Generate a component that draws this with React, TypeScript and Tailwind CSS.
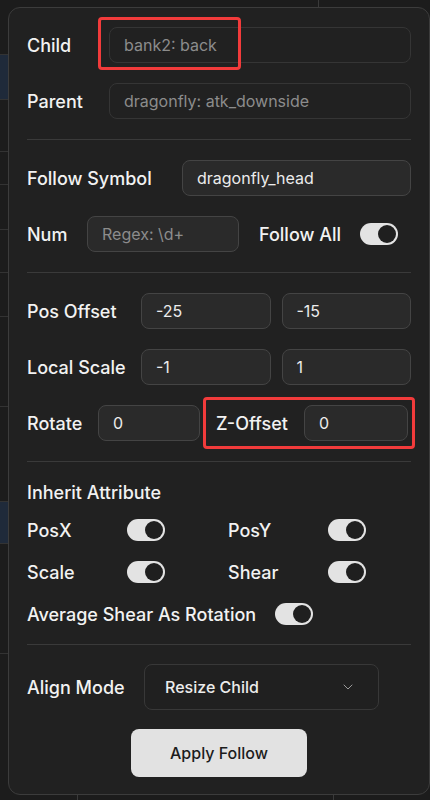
import { ChevronDown } from "lucide-react";

const font = { fontFamily: "Inter, 'Noto Sans', sans-serif" };

function Toggle() {
  return (
    <div className="relative h-[22px] w-[38px] flex-shrink-0 rounded-full bg-[#e3e3e3]">
      <div className="absolute right-[2px] top-[2px] h-[18px] w-[18px] rounded-full bg-[#1f1f1f]" />
    </div>
  );
}

function Field({
  value,
  muted,
  plain,
  className = "",
}: {
  value: string;
  muted?: boolean;
  plain?: boolean;
  className?: string;
}) {
  return (
    <div
      className={`flex h-9 items-center rounded-lg border px-[14px] text-[16px] ${
        plain
          ? "border-[#353535] bg-[#212121] text-[#8c8c8c]"
          : muted
            ? "border-[#444] bg-[#2a2a2a] text-[#8c8c8c]"
            : "border-[#444] bg-[#2a2a2a] text-[#ececec]"
      } ${className}`}
    >
      {value}
    </div>
  );
}

function Label({ children, className = "" }: { children: React.ReactNode; className?: string }) {
  return <span className={`flex-shrink-0 text-[18px] font-medium text-[#f2f2f2] ${className}`}>{children}</span>;
}

function Sep() {
  return <div className="h-px bg-[#3a3a3a]" />;
}

export default function App() {
  return (
    <div className="relative h-[800px] w-[430px] overflow-hidden bg-[#1c1c1c]" style={font}>
      {/* background app peeking around the popover */}
      <div className="absolute left-0 top-0 flex h-full w-[8px] flex-col">
        <div className="h-[55px] border-b border-[#333]" />
        <div className="h-[45px] bg-[#1f2a3a] border-b border-[#333]" />
        <div className="h-[52px] border-b border-[#333]" />
        <div className="h-[33px] border-b border-[#333]" />
        <div className="h-[45px] border-b border-[#333]" />
        <div className="h-[43px] border-b border-[#333]" />
        <div className="h-[44px] border-b border-[#333]" />
        <div className="h-[90px] border-b border-[#333]" />
        <div className="h-[95px] border-b border-[#333]" />
        <div className="h-[42px] bg-[#1f2a3a] border-b border-[#333]" />
        <div className="h-[110px] border-b border-[#333]" />
      </div>
      <div className="absolute left-[318px] top-0 h-[8px] w-px bg-[#3a3a3a]" />
      <div className="absolute bottom-0 left-[77px] h-[5px] w-px bg-[#3a3a3a]" />
      <div className="absolute bottom-0 left-[333px] h-[5px] w-px bg-[#3a3a3a]" />

      {/* popover */}
      <div className="absolute left-[8px] top-[7px] flex w-[422px] flex-col rounded-xl border border-[#3c3c3c] bg-[#212121] px-[18px] pb-[17px] pt-[19px]">
        <div className="flex flex-col gap-5 pb-5">
          <div className="flex items-center">
            <Label className="w-[82px]">Child</Label>
            <Field value="bank2: back" plain className="flex-1" />
          </div>
          <div className="flex items-center">
            <Label className="w-[82px]">Parent</Label>
            <Field value="dragonfly: atk_downside" plain className="flex-1" />
          </div>
        </div>
        <Sep />
        <div className="flex flex-col gap-5 py-5">
          <div className="flex items-center">
            <Label className="w-[155px]">Follow Symbol</Label>
            <Field value="dragonfly_head" className="flex-1" />
          </div>
          <div className="flex items-center">
            <Label className="w-[60px]">Num</Label>
            <Field value="Regex: \d+" muted className="w-[152px]" />
            <Label className="ml-5">Follow All</Label>
            <div className="ml-[19px]">
              <Toggle />
            </div>
          </div>
        </div>
        <Sep />
        <div className="flex flex-col gap-5 py-5">
          <div className="flex items-center">
            <Label className="w-[114px]">Pos Offset</Label>
            <div className="flex flex-1 gap-[11px]">
              <Field value="-25" className="flex-1" />
              <Field value="-15" className="flex-1" />
            </div>
          </div>
          <div className="flex items-center">
            <Label className="w-[114px]">Local Scale</Label>
            <div className="flex flex-1 gap-[11px]">
              <Field value="-1" className="flex-1" />
              <Field value="1" className="flex-1" />
            </div>
          </div>
          <div className="flex items-center">
            <Label className="w-[71px]">Rotate</Label>
            <Field value="0" className="w-[102px]" />
            <Label className="ml-4 w-[88px]">Z-Offset</Label>
            <Field value="0" className="w-[104px]" />
          </div>
        </div>
        <Sep />
        <div className="flex flex-col pb-[19px] pt-5">
          <span className="text-[18px] font-medium leading-[22px] text-[#f2f2f2]">Inherit Attribute</span>
          <div className="mt-[15px] grid grid-cols-[201px_1fr] gap-y-5">
            <div className="flex h-[22px] items-center">
              <Label className="w-[100px]">PosX</Label>
              <Toggle />
            </div>
            <div className="flex h-[22px] items-center">
              <Label className="w-[100px]">PosY</Label>
              <Toggle />
            </div>
            <div className="flex h-[22px] items-center">
              <Label className="w-[100px]">Scale</Label>
              <Toggle />
            </div>
            <div className="flex h-[22px] items-center">
              <Label className="w-[100px]">Shear</Label>
              <Toggle />
            </div>
            <div className="col-span-2 flex h-[22px] items-center gap-[19px]">
              <Label>Average Shear As Rotation</Label>
              <Toggle />
            </div>
          </div>
        </div>
        <Sep />
        <div className="flex flex-col items-center gap-[19px] pt-[19px]">
          <div className="flex w-full items-center">
            <Label className="w-[117px]">Align Mode</Label>
            <div className="flex h-[46px] w-[235px] items-center justify-between rounded-lg border border-[#383838] bg-[#202020] pl-5 pr-[22px] text-[16px] font-medium text-[#ececec]">
              <span>Resize Child</span>
              <ChevronDown size={16} strokeWidth={1.5} className="text-[#9a9a9a]" />
            </div>
          </div>
          <button className="h-12 w-[176px] rounded-lg bg-[#e2e2e2] text-[16px] font-medium text-[#1c1c1c]">
            Apply Follow
          </button>
        </div>
      </div>

      {/* annotation boxes */}
      <div className="absolute left-[98px] top-[17px] h-[53px] w-[143px] rounded-[4px] border-[3px] border-[#f23b3b]" />
      <div className="absolute left-[203px] top-[397px] h-[52px] w-[212px] rounded-[4px] border-[3px] border-[#f23b3b]" />
    </div>
  );
}
